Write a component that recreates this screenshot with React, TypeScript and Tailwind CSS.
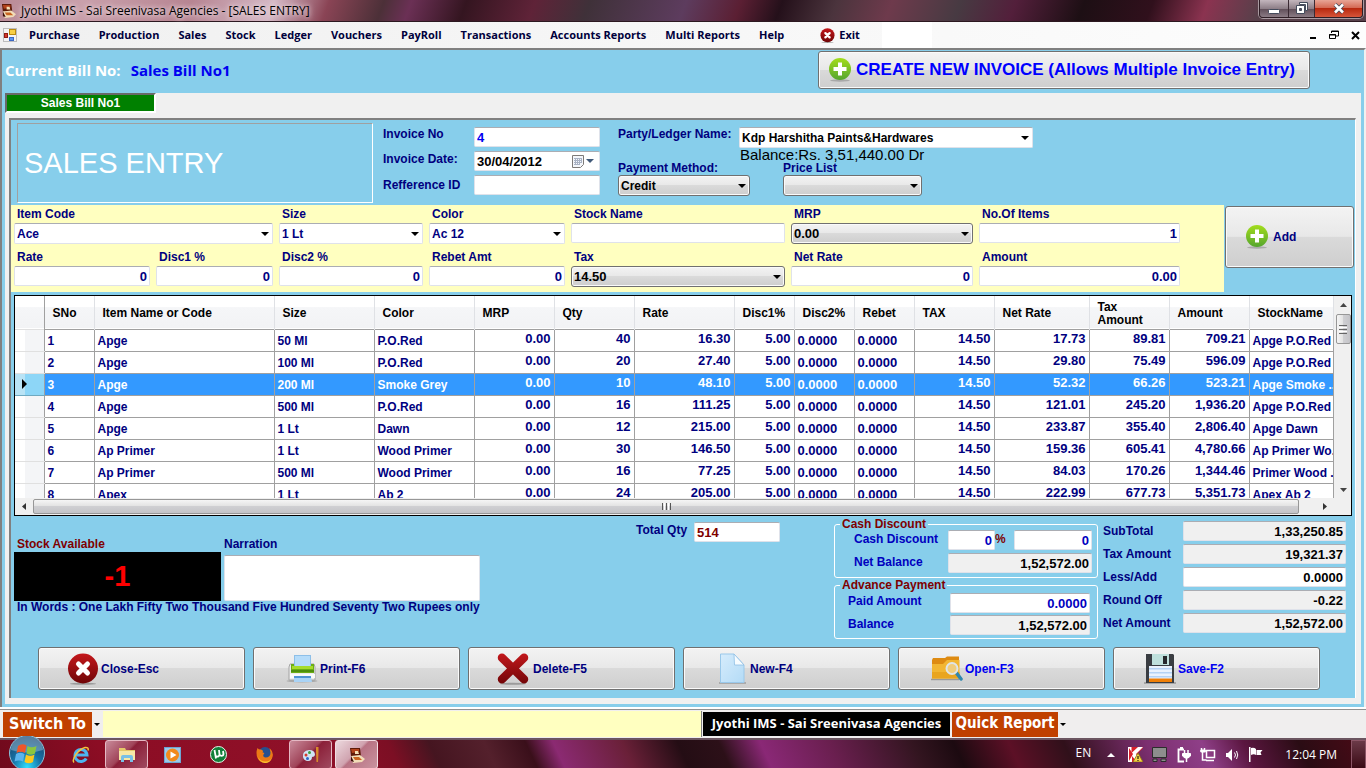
import React from "react";

const SANS = "font-['Liberation_Sans',Arial,sans-serif]";
const UI = "font-['Open_Sans','Noto_Sans',sans-serif]";
const TAHOMA = "font-['DejaVu_Sans_Condensed','DejaVu_Sans',sans-serif]";
const NAVY = "text-[#00007f]";

const BTN =
  "rounded-[3px] border border-[#707070] bg-[linear-gradient(180deg,#f3f3f3_0%,#e8e8e8_49%,#dadada_50%,#cecece_100%)] shadow-[inset_0_0_0_1px_#fafafa]";
const BOX =
  "h-5 w-full min-w-0 rounded-[2px] border border-[#dfe2ea] border-t-[#abadb3] px-[2px] outline-none";

/* ---------- icons ---------- */

function PlusIcon() {
  return (
    <svg width="24" height="26" viewBox="0 0 24 26" aria-hidden="true">
      <defs>
        <linearGradient id="gPlus" x1="0" y1="0" x2="0" y2="1">
          <stop offset="0" stopColor="#a3dd1c" />
          <stop offset="1" stopColor="#55a52e" />
        </linearGradient>
      </defs>
      <ellipse cx="12" cy="23.5" rx="10" ry="1.2" fill="#8c8c8c" opacity="0.6" />
      <circle cx="12" cy="12" r="11" fill="url(#gPlus)" />
      <path d="M10 5.5h4V10h4.500v4H14v4.500h-4V14H5.500v-4H10z" fill="#fff" />
    </svg>
  );
}

function CrossCircle({ size }: { size: number }) {
  return (
    <svg width={size} height={size} viewBox="0 0 32 32" aria-hidden="true">
      <defs>
        <linearGradient id="gCross" x1="0" y1="0" x2="0" y2="1">
          <stop offset="0" stopColor="#c4181c" />
          <stop offset="1" stopColor="#6f0507" />
        </linearGradient>
      </defs>
      <ellipse cx="16" cy="30.8" rx="13" ry="1" fill="#777" opacity="0.6" />
      <circle cx="16" cy="15.500" r="15" fill="url(#gCross)" />
      <path d="M11.500 11l9 9M20.500 11l-9 9" stroke="#fff" strokeWidth="5" strokeLinecap="round" />
    </svg>
  );
}

function DeleteIcon() {
  return (
    <svg width="32" height="32" viewBox="0 0 32 32" aria-hidden="true">
      <defs>
        <linearGradient id="gDel" x1="0" y1="0" x2="0" y2="32" gradientUnits="userSpaceOnUse">
          <stop offset="0" stopColor="#c4181c" />
          <stop offset="1" stopColor="#6f0507" />
        </linearGradient>
      </defs>
      <ellipse cx="16" cy="30.800" rx="13" ry="1" fill="#777" opacity="0.6" />
      <path d="M5 4.800L27 26.200M27 4.800L5 26.200" stroke="url(#gDel)" strokeWidth="8.500" strokeLinecap="round" />
    </svg>
  );
}

function PrintIcon() {
  return (
    <svg width="32" height="30" viewBox="0 0 32 30" aria-hidden="true">
      <ellipse cx="16" cy="27" rx="15.500" ry="1.500" fill="#999" opacity="0.7" />
      <path d="M4 10h24l1 3v13H3V13z" fill="#ececec" stroke="#a5a5a5" strokeWidth="1" />
      <rect x="8.500" y="1.500" width="16" height="11" fill="#b5dcfa" stroke="#8dbfe8" />
      <path d="M5 10h3v2h17v-2h3v9H5z" fill="#6cae14" />
      <path d="M6 12h21v3H6z" fill="#a6dc2c" />
      <path d="M5 16h23v2H5z" fill="#4e8f0c" />
      <path d="M4 20h25v4H4z" fill="#fafafa" />
      <path d="M8 23h17l1 5H8z" fill="#a9d3f6" />
      <path d="M8 22h17v2H8z" fill="#4f94d4" />
    </svg>
  );
}

function NewIcon() {
  return (
    <svg width="27" height="31" viewBox="0 0 27 31" aria-hidden="true">
      <defs>
        <linearGradient id="gNew" x1="0" y1="0" x2="1" y2="1">
          <stop offset="0" stopColor="#d6ecfc" />
          <stop offset="1" stopColor="#b3dbf6" />
        </linearGradient>
      </defs>
      <path d="M0 30h27" stroke="#888" strokeWidth="1.500" opacity="0.7" />
      <path d="M1.500 1h13.500l10 11v17.500H1.500z" fill="url(#gNew)" stroke="#9ac8ea" />
      <path d="M15 1l10 11H15.500z" fill="#f7fcff" stroke="#8fbfe4" strokeWidth="0.800" />
    </svg>
  );
}

function OpenIcon() {
  return (
    <svg width="32" height="25" viewBox="0 0 32 25" aria-hidden="true">
      <path d="M0 23.500h28" stroke="#999" strokeWidth="1.500" />
      <path d="M1 4l1-2h12l2-1.500h12V22H1z" fill="#de8b12" />
      <path d="M1 8h11l4-4h12.500v18.500H1z" fill="#f2b632" />
      <path d="M1 16h27.500v6.500H1z" fill="#e9a51f" />
      <path d="M25.500 17l4.500 6" stroke="#2f86ad" strokeWidth="3.500" strokeLinecap="round" />
      <circle cx="21" cy="12.500" r="5.500" fill="#f0cd7c" stroke="#dfe5e8" strokeWidth="2" />
    </svg>
  );
}

function SaveIcon() {
  return (
    <svg width="32" height="31" viewBox="0 0 32 31" aria-hidden="true">
      <path d="M0 30h32" stroke="#888" strokeWidth="1.500" opacity="0.800" />
      <path d="M2 1h27l1 1v28H2z" fill="#3a3d42" />
      <path d="M8 1h17v11H8z" fill="#bfe0dc" />
      <path d="M19 3h4v8h-4z" fill="#26282c" />
      <path d="M5 13h23v13H5z" fill="#eaf2fd" />
      <path d="M5 15h23v1.500H5zM5 19h23v1.500H5zM5 23h23v1.500H5z" fill="#b4d2f5" />
      <path d="M5 25.500h23V29H5z" fill="#f07f06" />
    </svg>
  );
}

function AppIcon({ size }: { size: number }) {
  return (
    <svg width={size} height={size} viewBox="0 0 16 16" aria-hidden="true">
      <path d="M1 1h10l1 8H2z" fill="#5d1a08" />
      <path d="M2 2h8v3L3 6z" fill="#b4431c" />
      <path d="M6 4h3l1 3H6z" fill="#f5dfb5" />
      <path d="M2 9l9-1 5 4-3 3-9 1z" fill="#f2ddb8" />
      <path d="M4 10h6l3 3H6z" fill="#c86420" />
      <path d="M2 9l3 6-3-1z" fill="#3a0e05" />
    </svg>
  );
}

function FormIcon() {
  return (
    <svg width="14" height="14" viewBox="0 0 14 14" aria-hidden="true">
      <rect x="0.500" y="0.500" width="13" height="13" fill="#f4f4f4" stroke="#bdbdbd" />
      <rect x="6.500" y="1.500" width="6" height="5" fill="#f7cf45" stroke="#b98b10" />
      <rect x="1.500" y="5.500" width="3" height="4" fill="#d4382c" stroke="#8f1c14" />
      <rect x="6.500" y="9.500" width="4" height="3" fill="#5a96ee" stroke="#3b68c4" />
    </svg>
  );
}

function Caret({ color = "#000" }: { color?: string }) {
  return (
    <svg width="8" height="4" viewBox="0 0 8 4" aria-hidden="true">
      <path d="M0 0h8L4 4z" fill={color} />
    </svg>
  );
}

function SmallCaret() {
  return (
    <svg width="6" height="3" viewBox="0 0 6 3" aria-hidden="true">
      <path d="M0 0h6L3 3z" />
    </svg>
  );
}

/* ---------- fields ---------- */

type ComboProps = { id: string; value: string; raised?: boolean; className?: string };

function Combo({ id, value, raised, className = NAVY }: ComboProps) {
  return (
    <div className="relative flex w-full">
      <select
        id={id}
        defaultValue={value}
        className={`h-[21px] w-full appearance-none truncate pl-[2px] pr-5 font-bold outline-none ${
          raised ? BTN : "rounded-[2px] border border-[#dfe2ea] border-t-[#abadb3] bg-white"
        } ${className}`}
      >
        <option value={value}>{value}</option>
      </select>
      <span className="pointer-events-none absolute inset-y-0 right-1 flex items-center">
        <Caret />
      </span>
    </div>
  );
}

type FieldProps = { id: string; label: string; children: React.ReactNode; className?: string };

function Field({ id, label, children, className = "" }: FieldProps) {
  return (
    <div className={`flex flex-col ${className}`}>
      <label htmlFor={id} className={`h-[17px] pl-[3px] leading-4 ${NAVY}`}>
        {label}
      </label>
      {children}
    </div>
  );
}

function NumBox({ id, value, className = "bg-white " + NAVY }: { id: string; value: string; className?: string }) {
  return <input id={id} defaultValue={value} className={`${BOX} text-right text-[13px] font-bold ${className}`} />;
}

/* ---------- data ---------- */

const MENU = [
  "Purchase", "Production", "Sales", "Stock", "Ledger", "Vouchers", "PayRoll",
  "Transactions", "Accounts Reports", "Multi Reports", "Help",
];

type Col = { title: string; width: string; kind: "text" | "num" | "dec" };

const COLS: Col[] = [
  { title: "SNo", width: "w-[50px]", kind: "text" },
  { title: "Item Name or Code", width: "w-[180px]", kind: "text" },
  { title: "Size", width: "w-[100px]", kind: "text" },
  { title: "Color", width: "w-[100px]", kind: "text" },
  { title: "MRP", width: "w-[80px]", kind: "num" },
  { title: "Qty", width: "w-[80px]", kind: "num" },
  { title: "Rate", width: "w-[100px]", kind: "num" },
  { title: "Disc1%", width: "w-[60px]", kind: "num" },
  { title: "Disc2%", width: "w-[60px]", kind: "dec" },
  { title: "Rebet", width: "w-[60px]", kind: "dec" },
  { title: "TAX", width: "w-[80px]", kind: "num" },
  { title: "Net Rate", width: "w-[95px]", kind: "num" },
  { title: "Tax Amount", width: "w-[80px]", kind: "num" },
  { title: "Amount", width: "w-[80px]", kind: "num" },
  { title: "StockName", width: "", kind: "text" },
];

const ROWS: string[][] = [
  ["1", "Apge", "50 Ml", "P.O.Red", "0.00", "40", "16.30", "5.00", "0.0000", "0.0000", "14.50", "17.73", "89.81", "709.21", "Apge P.O.Red"],
  ["2", "Apge", "100 Ml", "P.O.Red", "0.00", "20", "27.40", "5.00", "0.0000", "0.0000", "14.50", "29.80", "75.49", "596.09", "Apge P.O.Red"],
  ["3", "Apge", "200 Ml", "Smoke Grey", "0.00", "10", "48.10", "5.00", "0.0000", "0.0000", "14.50", "52.32", "66.26", "523.21", "Apge Smoke .."],
  ["4", "Apge", "500 Ml", "P.O.Red", "0.00", "16", "111.25", "5.00", "0.0000", "0.0000", "14.50", "121.01", "245.20", "1,936.20", "Apge P.O.Red"],
  ["5", "Apge", "1 Lt", "Dawn", "0.00", "12", "215.00", "5.00", "0.0000", "0.0000", "14.50", "233.87", "355.40", "2,806.40", "Apge Dawn"],
  ["6", "Ap Primer", "1 Lt", "Wood Primer", "0.00", "30", "146.50", "5.00", "0.0000", "0.0000", "14.50", "159.36", "605.41", "4,780.66", "Ap Primer Wo.."],
  ["7", "Ap Primer", "500 Ml", "Wood Primer", "0.00", "16", "77.25", "5.00", "0.0000", "0.0000", "14.50", "84.03", "170.26", "1,344.46", "Primer Wood .."],
  ["8", "Apex", "1 Lt", "Ab 2", "0.00", "24", "205.00", "5.00", "0.0000", "0.0000", "14.50", "222.99", "677.73", "5,351.73", "Apex Ab 2"],
];

const SELECTED = 2;

const ACTIONS = [
  { label: "Close-Esc", icon: <CrossCircle size={32} />, style: "pl-7 gap-[2px] text-[#00007f]" },
  { label: "Print-F6", icon: <PrintIcon />, style: "pl-8 gap-[2px] text-[#00007f]" },
  { label: "Delete-F5", icon: <DeleteIcon />, style: "pl-7 gap-1 text-[#00007f]" },
  { label: "New-F4", icon: <NewIcon />, style: "pl-[35px] gap-1 text-[#00007f]" },
  { label: "Open-F3", icon: <OpenIcon />, style: "pl-8 gap-[2px] text-[#0000f0]" },
  { label: "Save-F2", icon: <SaveIcon />, style: "pl-[30px] gap-[2px] text-[#0000f0]" },
];

const TOTALS = [
  { id: "subtotal", label: "SubTotal", value: "1,33,250.85", box: "bg-[#f0f0f0] text-black" },
  { id: "taxamount", label: "Tax Amount", value: "19,321.37", box: "bg-[#f0f0f0] text-black" },
  { id: "lessadd", label: "Less/Add", value: "0.0000", box: "bg-white text-black" },
  { id: "roundoff", label: "Round Off", value: "-0.22", box: "bg-[#f0f0f0] text-black" },
  { id: "netamount", label: "Net Amount", value: "1,52,572.00", box: "bg-[#f0f0f0] text-black" },
];

/* ---------- sections ---------- */

function TitleBar() {
  return (
    <header
      className={`flex h-[22px] items-start justify-between border-b border-[#2c1820] bg-[linear-gradient(110deg,#b98a96_0%,#c9a0ab_6%,#b78592_14%,#d5b9c6_20%,#8a4455_24%,#4c3038_28%,#6b3055_30%,#341520_34%,#5f2338_39%,#3f3139_43%,#5d3c5e_50%,#5b1f33_54%,#24101a_57%,#4b343d_61%,#6e3a4c_65%,#473a42_70%,#531f3b_74%,#1d0f14_79%,#30101c_84%,#8b3350_88%,#57404a_92%)] pr-[3px] ${UI}`}
    >
      <div className="flex h-[21px] items-center gap-[5px] pl-px">
        <AppIcon size={15} />
        <h1 className="text-xs font-normal leading-4 text-black [text-shadow:0_0_6px_#f3e6ea,0_0_4px_#e8d5dc]">
          Jyothi IMS - Sai Sreenivasa Agencies - [SALES ENTRY]
        </h1>
      </div>
      <div className="flex h-[18px] overflow-hidden rounded-b-[4px] border border-t-0 border-[#2e1e26] shadow-[0_0_0_1px_#a99aa1]">
        <button aria-label="Minimize" className="flex w-7 items-center justify-center bg-[linear-gradient(180deg,#c3b6bd,#8e7f88_50%,#5f4d58_51%,#8b7b85)]">
          <svg width="12" height="12" viewBox="0 0 12 12"><rect x="0.500" y="6.500" width="11" height="4" rx="1" fill="#fff" stroke="#454b5c" /></svg>
        </button>
        <button aria-label="Restore" className="flex w-[27px] items-center justify-center border-x border-[#3b2a33] bg-[linear-gradient(180deg,#c3b6bd,#8e7f88_50%,#5f4d58_51%,#8b7b85)]">
          <svg width="12" height="13" viewBox="0 0 12 13">
            <path d="M3.500 .5h8v8h-2v-6h-6z" fill="#fff" stroke="#454b5c" />
            <path d="M.5 3.500h8v8h-8zM3.500 6.500v2h2v-2z" fill="#fff" stroke="#454b5c" fillRule="evenodd" />
          </svg>
        </button>
        <button aria-label="Close" className="flex w-[47px] items-center justify-center bg-[linear-gradient(180deg,#e8a596,#d46a55_45%,#b8290f_50%,#d6553a)]">
          <svg width="12" height="11" viewBox="0 0 12 11">
            <path d="M2 1.500l8 8M10 1.500l-8 8" stroke="#454b5c" strokeWidth="4" />
            <path d="M2 1.500l8 8M10 1.500l-8 8" stroke="#fff" strokeWidth="2.500" />
          </svg>
        </button>
      </div>
    </header>
  );
}

function MenuBar() {
  return (
    <nav className={`flex h-[26px] items-center justify-between bg-[linear-gradient(90deg,#f0f0f0,#fdfdfd)] ${UI}`}>
      <div className="flex items-center self-stretch pl-[3px] text-[11px] font-bold text-[#00003c]">
        <FormIcon />
        <ul className="flex gap-[19px] pl-3">
          {MENU.map((m) => (
            <li key={m}>
              <button>{m}</button>
            </li>
          ))}
        </ul>
        <button className="ml-9 flex items-center gap-1">
          <CrossCircle size={15} />
          Exit
        </button>
        <span className="ml-[22px] w-[50px] self-stretch bg-white" />
      </div>
      <div className="flex items-center gap-3 pr-[6px]">
        <button aria-label="Minimize form" className="flex h-3 items-end"><svg width="7" height="4"><path d="M0 0h6v2H0z" /></svg></button>
        <button aria-label="Restore form">
          <svg width="10" height="10" viewBox="0 0 10 10" fill="none" stroke="#000"><path d="M2.500 3V1h7v5H7M2 1.500h8M.5 4.500h6v4h-6zM0 5h7" /></svg>
        </button>
        <button aria-label="Close form">
          <svg width="9" height="9" viewBox="0 0 9 9"><path d="M1 1l7 7M8 1L1 8" stroke="#000" strokeWidth="2" /></svg>
        </button>
      </div>
    </nav>
  );
}

function InvoiceHeader() {
  return (
    <section className="flex h-[85px] items-start pl-[6px] pt-[3px]">
      <div className="flex h-[80px] w-[356px] items-center border border-[#a0a0a0] border-b-white border-r-white pl-[6px]">
        <h2 className="text-[29px] font-normal text-white">SALES ENTRY</h2>
      </div>
      <div className={`ml-[10px] mt-1 grid grid-cols-[91px_126px] gap-y-1 ${NAVY}`}>
        <label htmlFor="invno" className="leading-[14px]">Invoice No</label>
        <input id="invno" defaultValue="4" className={`${BOX} bg-white text-[13px] font-bold text-[#0000f0]`} />
        <label htmlFor="invdate" className="leading-4">Invoice Date:</label>
        <div className="relative">
          <input id="invdate" defaultValue="30/04/2012" className={`${BOX} bg-white text-[13px] font-bold text-black`} />
          <span className="pointer-events-none absolute inset-y-0 right-[6px] flex items-center gap-[2px]">
            <svg width="12" height="13" viewBox="0 0 12 13" aria-hidden="true">
              <path d="M.5 .5h11v9l-3 3h-8z" fill="#f5f7fb" stroke="#7d7a78" />
              <path d="M2 3.500h8M2 5.500h8M2 7.500h8M2 9.500h6M3.500 3v7M5.500 3v7M7.500 3v7M9.500 3v5" stroke="#a9b2c4" />
            </svg>
            <Caret color="#3f5878" />
          </span>
        </div>
        <label htmlFor="refid" className="pt-[2px] leading-4">Refference ID</label>
        <input id="refid" className={`${BOX} bg-white`} />
      </div>
      <div className={`ml-[18px] mt-1 flex flex-col ${NAVY}`}>
        <div className="flex items-start">
          <label htmlFor="party" className="w-[121px] leading-[14px]">Party/Ledger Name:</label>
          <div className="w-[294px]">
            <Combo id="party" value="Kdp Harshitha Paints&Hardwares" className="text-black" />
          </div>
        </div>
        <output className="pl-[122px] text-[15px] font-normal leading-[14px] text-black">Balance:Rs. 3,51,440.00 Dr</output>
        <div className="flex gap-[33px]">
          <div className="flex w-[132px] flex-col">
            <label htmlFor="paymethod" className="leading-[13px]">Payment Method:</label>
            <Combo id="paymethod" value="Credit" raised className="text-black" />
          </div>
          <div className="flex w-[139px] flex-col">
            <label htmlFor="pricelist" className="leading-[13px]">Price List</label>
            <Combo id="pricelist" value="" raised className="text-black" />
          </div>
        </div>
      </div>
    </section>
  );
}

function ItemEntry() {
  return (
    <section className="flex items-start gap-px">
      <div className="grid min-w-0 flex-1 grid-cols-[136fr_117fr_144fr_136fr_214fr_182fr_201fr] gap-x-[6px] gap-y-[5px] bg-[#ffffc0] pb-[5px] pl-[3px] pr-11 pt-px">
        <Field id="itemcode" label="Item Code" className="col-span-2"><Combo id="itemcode" value="Ace" /></Field>
        <Field id="size" label="Size"><Combo id="size" value="1 Lt" /></Field>
        <Field id="color" label="Color"><Combo id="color" value="Ac 12" /></Field>
        <Field id="stockname" label="Stock Name"><input id="stockname" className={`${BOX} bg-white`} /></Field>
        <Field id="mrp" label="MRP"><Combo id="mrp" value="0.00" raised className="text-[13px] text-black" /></Field>
        <Field id="items" label="No.Of Items"><NumBox id="items" value="1" /></Field>
        <Field id="rate" label="Rate"><NumBox id="rate" value="0" /></Field>
        <Field id="disc1" label="Disc1 %"><NumBox id="disc1" value="0" /></Field>
        <Field id="disc2" label="Disc2 %"><NumBox id="disc2" value="0" /></Field>
        <Field id="rebet" label="Rebet Amt"><NumBox id="rebet" value="0" /></Field>
        <Field id="tax" label="Tax"><Combo id="tax" value="14.50" raised className="text-[13px] text-black" /></Field>
        <Field id="netrate" label="Net Rate"><NumBox id="netrate" value="0" /></Field>
        <Field id="amount" label="Amount"><NumBox id="amount" value="0.00" /></Field>
      </div>
      <button className={`mr-px mt-px flex h-[62px] w-[129px] items-center gap-1 pl-[19px] font-bold ${NAVY} ${BTN}`}>
        <PlusIcon />
        Add
      </button>
    </section>
  );
}

function ItemsTable() {
  return (
    <section className="ml-[3px] mr-[3px] mt-[3px] border border-black bg-[#f0f0f0]">
      <div className="flex">
        <div className="h-[202px] min-w-0 flex-1 overflow-hidden bg-white">
          <table className="w-full table-fixed border-collapse">
            <colgroup>
              <col className="w-[29px]" />
              {COLS.map((c) => (
                <col key={c.title} className={c.width} />
              ))}
            </colgroup>
            <thead>
              <tr className="h-[33px] border-b border-[#a0a0a0] bg-[linear-gradient(180deg,#fff_0%,#fff_35%,#f5f6f8_36%,#f2f3f5_100%)] text-left text-black">
                <th className="border-r border-[#a0a0a0]" aria-label="Row" />
                {COLS.map((c) => (
                  <th key={c.title} className="overflow-hidden border-r border-[#dfe1e5] pl-2 pr-1 pt-[3px] leading-[13px]">
                    {c.title === "Tax Amount" ? (
                      <>
                        Tax
                        <br />
                        Amount
                      </>
                    ) : (
                      c.title
                    )}
                  </th>
                ))}
              </tr>
            </thead>
            <tbody>
              {ROWS.map((row, i) => {
                const on = i === SELECTED;
                return (
                  <tr key={row[0]} className={`h-[22px] ${on ? "bg-[#3399ff] text-white" : "bg-white text-[#00007f]"}`}>
                    <td
                      className={`border-r border-r-[#a0a0a0] p-0 pl-[7px] ${
                        on
                          ? "border-y border-y-[#6fa9c0] bg-[linear-gradient(90deg,#b9e3f5_35%,#8dd6f7_36%)]"
                          : "border-y border-y-[#e0e0e0] bg-[linear-gradient(90deg,#fff_35%,#f4f5f7_36%)]"
                      }`}
                    >
                      {on && (
                        <svg width="5" height="10" viewBox="0 0 5 10" aria-hidden="true">
                          <path d="M0 0l5 5-5 5z" />
                        </svg>
                      )}
                    </td>
                    {row.map((v, j) => {
                      const kind = COLS[j].kind;
                      const align =
                        kind === "num"
                          ? "pb-[2px] pr-[3px] text-right text-[13px]"
                          : kind === "dec"
                            ? "pl-[3px] pt-px text-left text-[13px]"
                            : "pl-[3px] pt-[2px] text-left";
                      return (
                        <td
                          key={j}
                          className={`overflow-hidden whitespace-nowrap border border-[#a0a0a0] p-0 font-bold leading-4 ${align}`}
                        >
                          {v}
                        </td>
                      );
                    })}
                  </tr>
                );
              })}
            </tbody>
          </table>
        </div>
        <div className="flex w-[17px] flex-col items-center pl-px">
          <button aria-label="Scroll up" className="flex h-[18px] w-full items-center justify-center">
            <svg width="7" height="4"><path d="M0 4h7L3.500 0z" fill="#444" /></svg>
          </button>
          <div className="flex h-[30px] w-[15px] flex-col items-center justify-center gap-px rounded-[2px] border border-[#979797] bg-[linear-gradient(90deg,#f5f5f5,#e3e3e3_45%,#cfcfd2_50%,#c4c4c8)]">
            <span className="h-px w-2 bg-[#666]" />
            <span className="h-px w-2 bg-white" />
            <span className="h-px w-2 bg-[#666]" />
            <span className="h-px w-2 bg-white" />
            <span className="h-px w-2 bg-[#666]" />
          </div>
          <button aria-label="Scroll down" className="mt-auto flex h-[17px] w-full items-center justify-center">
            <svg width="7" height="4"><path d="M0 0h7L3.500 4z" fill="#444" /></svg>
          </button>
        </div>
      </div>
      <div className="flex h-[17px] pr-[17px]">
        <button aria-label="Scroll left" className="flex w-[18px] items-center justify-center">
          <svg width="4" height="7"><path d="M4 0v7L0 3.500z" fill="#333" /></svg>
        </button>
        <div className="mt-px flex h-[15px] flex-1 items-center justify-center gap-px rounded-[2px] border border-[#979797] bg-[linear-gradient(180deg,#f5f5f5,#e3e3e3_45%,#cfcfd2_50%,#c4c4c8)]">
          <span className="h-[7px] w-px bg-[#555]" />
          <span className="h-[7px] w-px bg-white" />
          <span className="h-[7px] w-px bg-[#555]" />
          <span className="h-[7px] w-px bg-white" />
          <span className="h-[7px] w-px bg-[#555]" />
        </div>
        <button aria-label="Scroll right" className="flex w-[35px] items-center justify-center pl-4">
          <svg width="4" height="7"><path d="M0 0v7l4-3.500z" fill="#333" /></svg>
        </button>
      </div>
    </section>
  );
}

function Summary() {
  return (
    <section className="flex h-[131px] items-start pl-[3px] pr-[9px]">
      <div className="w-[470px] pt-5">
        <div className="flex gap-[3px]">
          <div className="flex w-[207px] flex-col">
            <span className="pl-[3px] leading-4 text-[#7f0000]">Stock Available</span>
            <output className="flex h-[49px] items-center justify-center bg-black text-[29px] font-bold text-[#ff0000]">-1</output>
          </div>
          <div className="flex w-[256px] flex-col">
            <label htmlFor="narration" className={`h-[19px] leading-4 ${NAVY}`}>Narration</label>
            <textarea id="narration" className="h-[46px] w-full resize-none rounded-[2px] border border-[#dfe2ea] border-t-[#abadb3] bg-white outline-none" />
          </div>
        </div>
        <p className={`whitespace-nowrap pl-[3px] leading-[13px] ${NAVY}`}>
          In Words : One Lakh Fifty Two Thousand Five Hundred Seventy Two Rupees only
        </p>
      </div>
      <div className="ml-auto flex items-start pt-[6px]">
        <label htmlFor="totalqty" className={`w-[58px] leading-4 ${NAVY}`}>Total Qty</label>
        <div className="w-[86px]">
          <input id="totalqty" defaultValue="514" className={`${BOX} bg-white text-[13px] font-bold text-[#7f0000]`} />
        </div>
      </div>
      <div className="ml-[54px] flex w-[264px] flex-col pt-[2px] text-[#0000bf]">
        <fieldset className="flex h-[60px] flex-col gap-[3px] rounded-[3px] border border-white pl-[19px] pr-[5px]">
          <legend className="-ml-[14px] px-[2px] leading-3 text-[#7f0000]">Cash Discount</legend>
          <div className="flex">
            <label htmlFor="cashpct" className="w-[94px] pt-px leading-4">Cash Discount</label>
            <div className="w-[47px]"><NumBox id="cashpct" value="0" className="bg-white text-[#0000bf]" /></div>
            <span className="w-[19px] leading-[18px] text-[#7f0000]">%</span>
            <label htmlFor="cashamt" className="sr-only">Cash discount amount</label>
            <div className="flex-1"><NumBox id="cashamt" value="0" className="bg-white text-[#0000bf]" /></div>
          </div>
          <div className="flex">
            <label htmlFor="netbal" className="w-[94px] leading-[18px]">Net Balance</label>
            <div className="flex-1"><NumBox id="netbal" value="1,52,572.00" className="bg-[#f0f0f0] text-black" /></div>
          </div>
        </fieldset>
        <fieldset className="mt-px flex h-[60px] flex-col gap-[2px] rounded-[3px] border border-white pl-[13px] pr-[7px] pt-[2px]">
          <legend className="-ml-2 px-[2px] leading-3 text-[#7f0000]">Advance Payment</legend>
          <div className="flex">
            <label htmlFor="paid" className="w-[102px] leading-4">Paid Amount</label>
            <div className="flex-1"><NumBox id="paid" value="0.0000" className="bg-white text-[#0000bf]" /></div>
          </div>
          <div className="flex">
            <label htmlFor="bal" className="w-[102px] leading-[18px]">Balance</label>
            <div className="flex-1"><NumBox id="bal" value="1,52,572.00" className="bg-[#f0f0f0] text-black" /></div>
          </div>
        </fieldset>
      </div>
      <div className="ml-[5px] flex w-[243px] flex-col gap-[3px] pt-[5px]">
        {TOTALS.map((t) => (
          <div key={t.id} className="flex">
            <label htmlFor={t.id} className={`w-20 leading-5 ${NAVY}`}>{t.label}</label>
            <div className="flex-1"><NumBox id={t.id} value={t.value} className={t.box} /></div>
          </div>
        ))}
      </div>
    </section>
  );
}

function StatusBar() {
  return (
    <footer className="flex h-7 items-stretch bg-[#f0eeee] py-[2px]">
      <button className={`ml-[3px] flex w-[100px] items-center gap-[2px] text-base font-bold text-white ${TAHOMA}`}>
        <span className="flex h-[25px] w-[89px] items-center justify-center bg-[#c04000]">Switch To</span>
        <SmallCaret />
      </button>
      <div className="-my-px flex-1 border-r border-[#808080] bg-[#ffffc0]" />
      <div className={`ml-px flex w-[247px] items-center justify-center whitespace-nowrap bg-black text-[13px] font-bold text-white ${UI}`}>
        Jyothi IMS - Sai Sreenivasa Agencies
      </div>
      <button className={`ml-[2px] flex items-center gap-[2px] text-[15px] font-bold text-white ${TAHOMA}`}>
        <span className="flex h-[25px] w-[106px] items-center justify-center whitespace-nowrap bg-[#c04000]">Quick Report</span>
        <SmallCaret />
      </button>
      <div className="w-[300px]" />
    </footer>
  );
}

const TASK = "flex h-[29px] w-[43px] items-center justify-center";
const TASK_OPEN = "rounded-[3px] border border-[#e5b9c4] bg-[linear-gradient(135deg,#c98a9a,#a04459_45%,#8b1f38_50%,#a04a60)]";

function Taskbar() {
  return (
    <div className="flex h-[31px] items-center border-t-2 border-[#6b5560] bg-[linear-gradient(65deg,#6f0a1c_0%,#8c0d24_8%,#8f1028_24%,#7c0f24_29%,#451520_32%,#54202c_36%,#3a0f1a_39%,#8b2a72_41%,#6a2038_46%,#240d14_50%,#2c1018_53%,#8a2876_56%,#6a1f4f_61%,#331520_67%,#1c0a10_70%,#5c1026_74%,#30101a_78%,#7c2f70_84%,#8f3f88_88%,#5b1640_91%,#2a0c14_95%,#4a0a16_100%)]">
      <button aria-label="Start" className="-mt-1 ml-2 flex">
        <svg width="38" height="33" viewBox="0 0 38 33" aria-hidden="true">
          <defs>
            <radialGradient id="gOrb" cx="0.500" cy="0.900" r="0.900">
              <stop offset="0" stopColor="#2fe0ff" />
              <stop offset="0.450" stopColor="#1673a8" />
              <stop offset="1" stopColor="#1c3f66" />
            </radialGradient>
          </defs>
          <circle cx="19" cy="17" r="17.500" fill="url(#gOrb)" stroke="#8fc3da" strokeWidth="1" />
          <path d="M3 14a16 14 0 0 1 32 0q-16 5-32 0z" fill="#b7d6e8" opacity="0.400" />
          <path d="M10 10q4-3 8.500-.5L17 17q-4-2.500-8.500 0z" fill="#f0562a" />
          <path d="M19.500 10q4 2.500 9 0L27 17.500q-4 2.500-8.500 0z" fill="#8cc63e" />
          <path d="M8 18q4-2.500 8.500 0L15 25.500q-4-2-8.500 0z" fill="#5bb4ee" />
          <path d="M18 18.500q4 2.500 8.500 0L25 26q-4 2.500-8.500 0z" fill="#fcc81e" />
        </svg>
      </button>
      <div className="ml-[13px] flex items-center gap-[3px]">
        <button aria-label="Internet Explorer" className={TASK}>
          <svg width="18" height="18" viewBox="0 0 18 18" fill="none" aria-hidden="true">
            <path d="M14.200 12.500a6 6 0 1 1 .8-3.500H4" stroke="#4cb5f0" strokeWidth="3" />
            <path d="M2 16.500C-1 13 7 3 13 1.500q4-.5 3 3" stroke="#f3c53c" strokeWidth="1.500" />
          </svg>
        </button>
        <button aria-label="Explorer" className={`${TASK} ${TASK_OPEN}`}>
          <svg width="18" height="17" viewBox="0 0 18 17" aria-hidden="true">
            <path d="M1 2h6l1 2h9v10H1z" fill="#e6c76a" />
            <path d="M1 5h16v9H1z" fill="#f8e7a6" />
            <path d="M3 16v-5q0-2 2-2h8q2 0 2 2v5h-3v-4H6v4z" fill="#79bfe6" />
          </svg>
        </button>
        <button aria-label="Media Player" className={TASK}>
          <svg width="17" height="16" viewBox="0 0 17 16" aria-hidden="true">
            <rect x="0.500" y="0.500" width="16" height="15" fill="#9cc9ea" stroke="#6ea6d2" />
            <circle cx="8.500" cy="8" r="6.500" fill="#f28a1c" />
            <path d="M6.500 4.500l6 3.500-6 3.500z" fill="#fff" />
          </svg>
        </button>
        <button aria-label="uTorrent" className={TASK}>
          <svg width="17" height="17" viewBox="0 0 17 17" aria-hidden="true">
            <circle cx="8.500" cy="8.500" r="8" fill="#12803a" stroke="#e9f5ec" />
            <path d="M4.500 4l1.500 8.500M5 9.500q4 2.500 4.500-1L9 4M9.500 9q3.500 2 4-1L13 5" stroke="#fff" strokeWidth="1.800" fill="none" />
          </svg>
        </button>
        <button aria-label="Firefox" className={TASK}>
          <svg width="17" height="17" viewBox="0 0 17 17" aria-hidden="true">
            <circle cx="9" cy="7.500" r="6.500" fill="#27508f" />
            <path d="M1.500 2Q3 4 5 3.500q3 1 1.500 3 3 0 1 2-1 2.500 2 3 5 0 5-5L13.500 2Q18 6 16.500 11a8 8 0 0 1-15 1Q-.5 7 1.500 2z" fill="#ec7a16" />
            <path d="M2 11q3 5 8 4.500 4 0 6-4-2 6-7.500 5.500Q3.500 16 2 11z" fill="#f9c02d" />
          </svg>
        </button>
        <button aria-label="Paint" className={`${TASK} ${TASK_OPEN}`}>
          <svg width="17" height="16" viewBox="0 0 17 16" aria-hidden="true">
            <path d="M1 10Q0 4 7 3q6 0 6 5-.5 2-3 2 0 4-4 4-4 0-5-4z" fill="#cfe4f4" />
            <circle cx="4" cy="8" r="1.500" fill="#d63a2b" />
            <circle cx="7.500" cy="5.500" r="1.500" fill="#3c9e3b" />
            <circle cx="5.500" cy="11.500" r="1.500" fill="#2c64c8" />
            <path d="M14 0h2.500v5L16 15h-1.500L14 5z" fill="#d88a2a" />
          </svg>
        </button>
        <button aria-label="Jyothi IMS" className={`${TASK} rounded-[3px] border border-[#f2dde2] bg-[linear-gradient(135deg,#ecd8dd,#d0a3af_45%,#b87384_50%,#c9949f)]`}>
          <AppIcon size={16} />
        </button>
      </div>
      <div className={`ml-auto flex h-full items-center text-xs font-normal text-white ${UI}`}>
        <span className="mr-4 pb-1">EN</span>
        <svg width="8" height="4" aria-hidden="true"><path d="M0 4h8L4 0z" fill="#fff" /></svg>
        <div className="ml-[13px] flex items-center gap-[9px]">
          <svg width="15" height="15" viewBox="0 0 15 15" aria-hidden="true">
            <path d="M0 0h15v1L9 7l5 8H0z" fill="#d9202a" />
            <path d="M0 0h3.500v6L10 0h5L8 7l5 8H9L4 9v6H0z" fill="#fff" />
            <path d="M1 1l4 6-4 7z" fill="#d9202a" />
            <path d="M10 6l5 9H5z" fill="#f4d548" stroke="#8a7010" strokeWidth="0.800" />
            <path d="M9.500 9h1v3h-1zM9.500 13h1v1h-1z" />
          </svg>
          <svg width="15" height="15" viewBox="0 0 15 15" aria-hidden="true">
            <path d="M.5 .5h14v10H.5z" fill="#8d8d8d" stroke="#2c2c2c" />
            <path d="M1 12h4v2.500H1zM9 12h5v2.500H9z" fill="#8d8d8d" stroke="#2c2c2c" />
          </svg>
          <svg width="15" height="16" viewBox="0 0 15 16" fill="none" stroke="#fff" aria-hidden="true">
            <path d="M8 14.500H2.500v-12H8M4 .8h3" strokeWidth="1.800" />
            <path d="M8.500 3v4M12 3v4" strokeWidth="1.500" />
            <path d="M6.500 6.500h8V9l-2.500 2H9L6.500 9z" fill="#fff" />
            <path d="M10.500 11v4" strokeWidth="1.500" />
          </svg>
          <svg width="16" height="15" viewBox="0 0 16 15" fill="none" stroke="#fff" aria-hidden="true">
            <path d="M6.500 3.500h8v7h-8z" strokeWidth="1.500" />
            <path d="M6 13.500h8M2.500 5v8h4M1.500 1v3M4.500 1v3" strokeWidth="1.500" />
            <path d="M.8 3h4.500v2H.8z" fill="#fff" />
          </svg>
          <svg width="14" height="14" viewBox="0 0 14 14" aria-hidden="true">
            <path d="M1 5h2l4-4v12L3 9H1z" fill="#fff" />
            <path d="M9.500 4.500q2 2.500 0 5M11.500 3q2.500 4 0 8" stroke="#fff" fill="none" />
          </svg>
          <svg width="15" height="15" viewBox="0 0 15 15" aria-hidden="true">
            <path d="M1 0h1.500v15H1zM3 1q3-1 5 1v6Q6 6.500 3 8zM8.500 3h6l-2 2.500 1 2.500h-5z" fill="#fff" />
          </svg>
        </div>
        <time className="ml-[22px]">12:04 PM</time>
        <button aria-label="Show desktop" className="ml-[14px] h-full w-[15px] border border-[#8c5566] bg-[linear-gradient(180deg,#6b3a48,#3a0a14)]" />
      </div>
    </div>
  );
}

export default function App() {
  return (
    <div className={`flex min-h-screen flex-col bg-[#87ceeb] text-xs font-bold ${SANS}`}>
      <TitleBar />
      <MenuBar />
      <main className="flex flex-col border-l-2 border-r-2 border-t-2 border-l-[#808080] border-r-[#f0f0f0] border-t-[#808080] px-[3px] pb-[3px]">
        <div className="flex h-[43px] items-start justify-between pr-[51px]">
          <p className={`flex h-10 items-center gap-[10px] text-[15px] font-bold ${UI}`}>
            <span className="text-white">Current Bill No:</span>
            <span className="text-[#0000f0]">Sales Bill No1</span>
          </p>
          <button className={`mt-px flex h-[38px] w-[492px] items-center gap-1 whitespace-nowrap pl-[9px] text-[17px] font-bold text-[#0000ff] ${BTN}`}>
            <PlusIcon />
            CREATE NEW INVOICE (Allows Multiple Invoice Entry)
          </button>
        </div>
        <div className="bg-[#f0f0f0] pb-[6px] pl-1 pr-[5px]">
          <div className="-ml-1 h-[25px]">
            <button className="flex h-5 w-[151px] items-center justify-center border-2 border-[#696969] border-b-white border-r-white bg-[#008000] text-white">
              Sales Bill No1
            </button>
          </div>
          <div className="border-l-2 border-r border-t-2 border-l-[#808080] border-r-white border-t-[#808080] bg-[#87ceeb] pb-2">
            <InvoiceHeader />
            <ItemEntry />
            <ItemsTable />
            <Summary />
            <div className="grid grid-cols-6 gap-2 pl-[27px] pr-[35px]">
              {ACTIONS.map((a) => (
                <button key={a.label} className={`flex h-[43px] min-w-0 items-center ${a.style} ${BTN}`}>
                  {a.icon}
                  {a.label}
                </button>
              ))}
            </div>
          </div>
        </div>
      </main>
      <div className="h-[3px] border-y border-y-[#909090] border-t-white bg-white" />
      <StatusBar />
      <Taskbar />
    </div>
  );
}
